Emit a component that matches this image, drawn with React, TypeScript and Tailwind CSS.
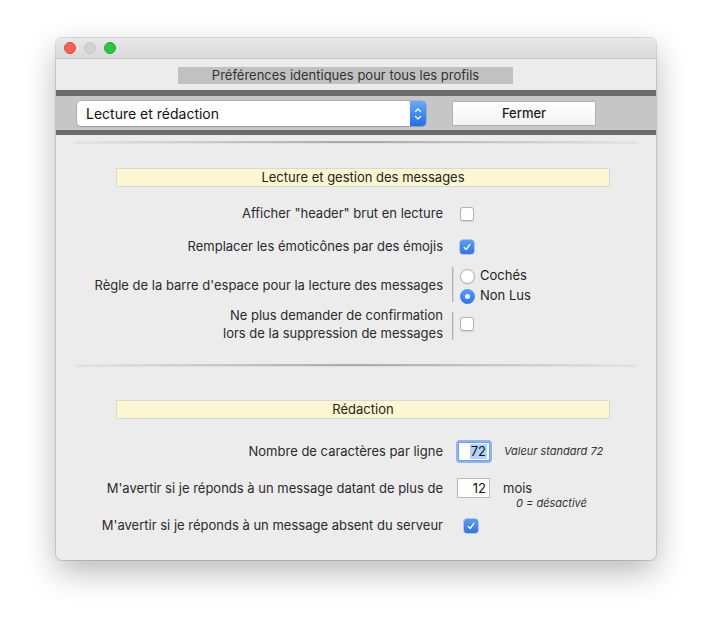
import React from 'react';

function CheckBox({ checked = false }: { checked?: boolean }) {
  if (checked) {
    return (
      <span className="flex h-[14px] w-[14px] items-center justify-center rounded-[3px] bg-linear-to-b from-[#5a9cfa] to-[#2c74f2] shadow-[0_0_0_0.5px_rgba(20,80,200,0.5)]">
        <svg viewBox="0 0 10 10" className="h-[10px] w-[10px]">
          <path d="M2.2 5.4 L4.2 7.5 L7.9 2.3" fill="none" stroke="white" strokeWidth="1.4" strokeLinecap="round" strokeLinejoin="round" />
        </svg>
      </span>
    );
  }
  return <span className="block h-[14px] w-[14px] rounded-[3px] border border-[#b5b5b5] bg-white shadow-[0_0.5px_1px_rgba(0,0,0,0.12)]" />;
}

function Radio({ on = false, label }: { on?: boolean; label: string }) {
  return (
    <div className="flex h-[20px] items-center gap-[5px]">
      {on ? (
        <span className="flex h-[15px] w-[15px] items-center justify-center rounded-full bg-linear-to-b from-[#5a9cfa] to-[#2c74f2]">
          <span className="h-[5px] w-[5px] rounded-full bg-white" />
        </span>
      ) : (
        <span className="block h-[15px] w-[15px] rounded-full border border-[#b0b0b0] bg-white shadow-[0_0.5px_1px_rgba(0,0,0,0.12)]" />
      )}
      <span className="text-[13px] text-[#1f1f1f]">{label}</span>
    </div>
  );
}

function VLine({ className = '' }: { className?: string }) {
  return <div className={`w-[2px] border-l border-[#b3b3b3] bg-[#d6d6d6] ${className}`} />;
}

function Groove() {
  return <div className="mx-[19px] h-[2px] bg-linear-to-r from-[#e6e6e6] via-[#a9a9a9] to-[#e6e6e6] shadow-[0_1px_1px_rgba(0,0,0,0.06)]" />;
}

function SectionHeader({ title }: { title: string }) {
  return (
    <div className="ml-[60px] flex h-[19px] w-[494px] items-center justify-center border border-[#d9d9d4] bg-[#fcf7d0] text-[13px] text-[#222]">
      {title}
    </div>
  );
}

export default function App() {
  return (
    <div className="h-[634px] w-[712px] overflow-hidden bg-white pl-[56px] pt-[38px] font-['Inter','Liberation_Sans',sans-serif] text-[#2b2b2b]">
      <div className="flex h-[522px] w-[600px] flex-col overflow-hidden rounded-[6px] bg-[#ececec] shadow-[0_0_0_1px_rgba(0,0,0,0.12),0_12px_32px_rgba(0,0,0,0.28)]">
        {/* Title bar */}
        <div className="flex h-[21px] shrink-0 items-center gap-[8px] border-b border-[#c8c8c8] bg-linear-to-b from-[#e9e9e9] to-[#d8d8d8] pl-[8px]">
          <span className="h-[12px] w-[12px] rounded-full border border-[#e2463f] bg-[#fe5f57]" />
          <span className="h-[12px] w-[12px] rounded-full border border-[#c4c4c4] bg-[#d3d3d3]" />
          <span className="h-[12px] w-[12px] rounded-full border border-[#1eaa33] bg-[#28c940]" />
        </div>

        <div className="ml-[122px] mt-[8px] h-[17px] w-[335px] bg-[#c1c1c1] text-center text-[13px] leading-[17px] text-[#333]">
          Préférences identiques pour tous les profils
        </div>

        {/* Toolbar band */}
        <div className="mt-[6px] h-[6px] bg-[#6b6b6b]" />
        <div className="flex h-[34px] items-start bg-[#c6c6c6] pt-[5px]">
          <div className="ml-[21px] flex h-[25px] w-[349px] items-stretch rounded-[4px] bg-white shadow-[0_0_0_0.5px_rgba(0,0,0,0.22),0_1px_1px_rgba(0,0,0,0.12)]">
            <span className="flex-1 pl-[9px] text-[14px] leading-[25px] text-[#111]">Lecture et rédaction</span>
            <span className="flex w-[16px] items-center justify-center rounded-r-[4px] bg-linear-to-b from-[#69a8fb] to-[#1d6ef3]">
              <svg viewBox="0 0 10 18" className="h-[18px] w-[10px]">
                <path d="M2.5 6.5 L5 4 L7.5 6.5 M2.5 11.5 L5 14 L7.5 11.5" fill="none" stroke="white" strokeWidth="1.3" strokeLinecap="round" strokeLinejoin="round" />
              </svg>
            </span>
          </div>
          <button className="ml-[26px] h-[25px] w-[144px] border border-[#b2b2b2] bg-linear-to-b from-white to-[#f2f2f2] text-[13px] font-medium text-[#1d1d1d]">
            Fermer
          </button>
        </div>
        <div className="h-[5px] bg-[#6b6b6b]" />

        <div className="mt-[6px]">
          <Groove />
        </div>

        {/* Lecture et gestion des messages */}
        <div className="mt-[25px]">
          <SectionHeader title="Lecture et gestion des messages" />
        </div>

        <div className="mt-[18px] flex h-[18px] items-center text-[13px]">
          <div className="w-[387px] text-right">Afficher "header" brut en lecture</div>
          <div className="ml-[17px]"><CheckBox /></div>
        </div>

        <div className="mt-[15px] flex h-[18px] items-center text-[13px]">
          <div className="w-[387px] text-right">Remplacer les émoticônes par des émojis</div>
          <div className="ml-[17px]"><CheckBox checked /></div>
        </div>

        <div className="mt-[10px] flex h-[40px] items-center text-[13px]">
          <div className="w-[387px] text-right">Règle de la barre d'espace pour la lecture des messages</div>
          <VLine className="ml-[9px] h-[35px] self-start mt-[1px]" />
          <div className="ml-[6px] flex flex-col">
            <Radio label="Cochés" />
            <Radio on label="Non Lus" />
          </div>
        </div>

        <div className="flex h-[36px] items-center text-[13px]">
          <div className="w-[387px] text-right leading-[18px]">
            Ne plus demander de confirmation
            <br />
            lors de la suppression de messages
          </div>
          <VLine className="ml-[9px] mt-[6px] h-[28px] self-start" />
          <div className="ml-[6px]"><CheckBox /></div>
        </div>

        <div className="mt-[22px]">
          <Groove />
        </div>

        {/* Rédaction */}
        <div className="mt-[34px]">
          <SectionHeader title="Rédaction" />
        </div>

        <div className="mt-[21px] flex h-[23px] items-center text-[13px]">
          <div className="w-[387px] text-right">Nombre de caractères par ligne</div>
          <div className="ml-[15px] flex h-[19px] w-[32px] items-center justify-end rounded-[2px] border border-[#6e9ff0] bg-white pr-[2px] shadow-[0_0_0_2px_rgba(95,150,240,0.65)]">
            <span className="bg-[#b4d3fb] px-[1px] leading-[15px] text-[#111]">72</span>
          </div>
          <div className="ml-[14px] text-[11px] italic text-[#333]">Valeur standard 72</div>
        </div>

        <div className="mt-[15px] flex items-start text-[13px]">
          <div className="w-[387px] text-right leading-[20px]">M'avertir si je réponds à un message datant de plus de</div>
          <div className="ml-[14px] h-[20px] w-[33px] border border-[#b8b8b8] bg-white pr-[3px] text-right leading-[18px] text-[#111]">12</div>
          <div className="ml-[13px] flex flex-col">
            <span className="leading-[20px]">mois</span>
            <span className="ml-[13px] text-[11px] italic leading-[11px] text-[#333]">0 = désactivé</span>
          </div>
        </div>

        <div className="mt-[8px] flex h-[18px] items-center text-[13px]">
          <div className="w-[387px] text-right">M'avertir si je réponds à un message absent du serveur</div>
          <div className="ml-[21px]"><CheckBox checked /></div>
        </div>
      </div>
    </div>
  );
}
